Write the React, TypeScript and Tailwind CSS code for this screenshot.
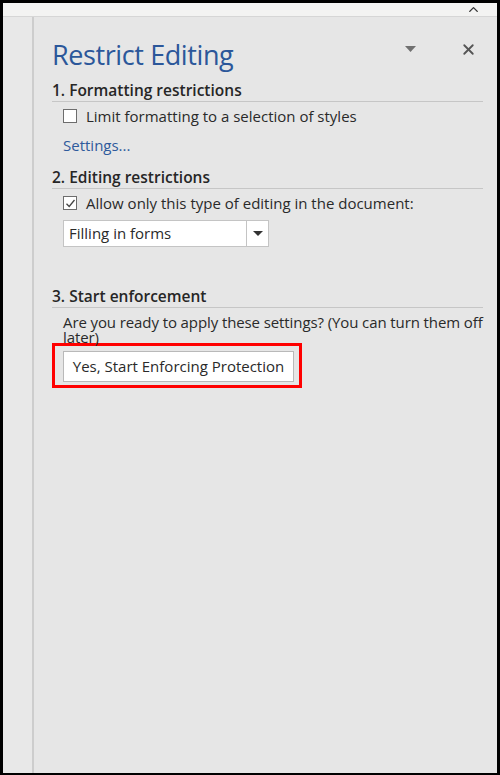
import { ChevronUp, X } from "lucide-react"

function Heading({ children }: { children: React.ReactNode }) {
  return (
    <div className="border-b border-[#c6c6c6] pb-[1px] text-[15.5px] font-semibold leading-[20px] text-[#262626]">
      {children}
    </div>
  )
}

function Checkbox({ checked }: { checked?: boolean }) {
  return (
    <span className="flex h-[14px] w-[14px] shrink-0 items-center justify-center border border-[#6d6d6d] bg-white">
      {checked && (
        <svg width="11" height="11" viewBox="0 0 11 11">
          <path d="M1.5 5.8 L4.2 8.5 L9.5 2" fill="none" stroke="#444" strokeWidth="1.3" />
        </svg>
      )}
    </span>
  )
}

export default function App() {
  return (
    <div
      className="flex h-[775px] w-[500px] flex-col border-[3px] border-b-[2px] border-black bg-[#e6e6e6] text-[#2a2a2a]"
      style={{ fontFamily: '"Open Sans", "Noto Sans", sans-serif' }}
    >
      <div className="flex h-[14px] items-center justify-end border-b border-[#d6d6d6] bg-[#f3f3f2] pr-[16px]">
        <ChevronUp size={15} strokeWidth={2.2} className="text-[#333]" />
      </div>
      <div className="flex flex-1">
        <div className="w-[29px] bg-[#e8e8e8]" />
        <div className="w-[2px] bg-[#cdcdcd]" />
        <div className="flex-1 pl-[18px] pr-[14px]">
          <div className="mt-[22px] flex items-center justify-between">
            <span className="text-[27px] font-normal leading-[32px] tracking-[-0.4px] text-[#2b579a]">
              Restrict Editing
            </span>
            <div className="-mt-[12px] flex items-center gap-[44px] pr-[6px]">
              <svg width="11" height="6" viewBox="0 0 11 6">
                <path d="M0 0 H11 L5.5 6 Z" fill="#707070" />
              </svg>
              <X size={17} strokeWidth={2.6} className="text-[#555]" />
            </div>
          </div>

          <div className="mt-[9px]">
            <Heading>1. Formatting restrictions</Heading>
            <div className="mt-[4px] flex items-center gap-[9px] pl-[11px] text-[15px] leading-[20px]">
              <Checkbox />
              <span>Limit formatting to a selection of styles</span>
            </div>
            <div className="mt-[9px] pl-[11px] text-[15px] leading-[20px] text-[#2e5a9c]">Settings...</div>
          </div>

          <div className="mt-[12px]">
            <Heading>2. Editing restrictions</Heading>
            <div className="mt-[4px] flex items-center gap-[9px] pl-[11px] text-[15px] leading-[20px]">
              <Checkbox checked />
              <span>Allow only this type of editing in the document:</span>
            </div>
            <div className="ml-[11px] mt-[7px] flex h-[27px] w-[206px] border border-[#c4c4c4] bg-white text-[15px]">
              <span className="flex flex-1 items-center pl-[5px]">Filling in forms</span>
              <span className="flex w-[22px] items-center justify-center border-l border-[#c4c4c4]">
                <svg width="10" height="5" viewBox="0 0 10 5">
                  <path d="M0 0 H10 L5 5 Z" fill="#333" />
                </svg>
              </span>
            </div>
          </div>

          <div className="mt-[39px]">
            <Heading>3. Start enforcement</Heading>
            <div className="-mr-[14px] mt-[7px] pl-[11px] text-[15px] leading-[15px] tracking-[-0.1px]">
              Are you ready to apply these settings? (You can turn them off later)
            </div>
            <div className="-mt-[2px] w-[250px] border-[3px] border-[#ff0000] pb-[3px] pl-[8px] pr-[5px] pt-[5px]">
              <div className="flex h-[31px] items-center justify-center border border-[#b9b9b9] bg-white text-[15px] text-[#2a2a2a]">
                Yes, Start Enforcing Protection
              </div>
            </div>
          </div>
        </div>
      </div>
    </div>
  )
}
